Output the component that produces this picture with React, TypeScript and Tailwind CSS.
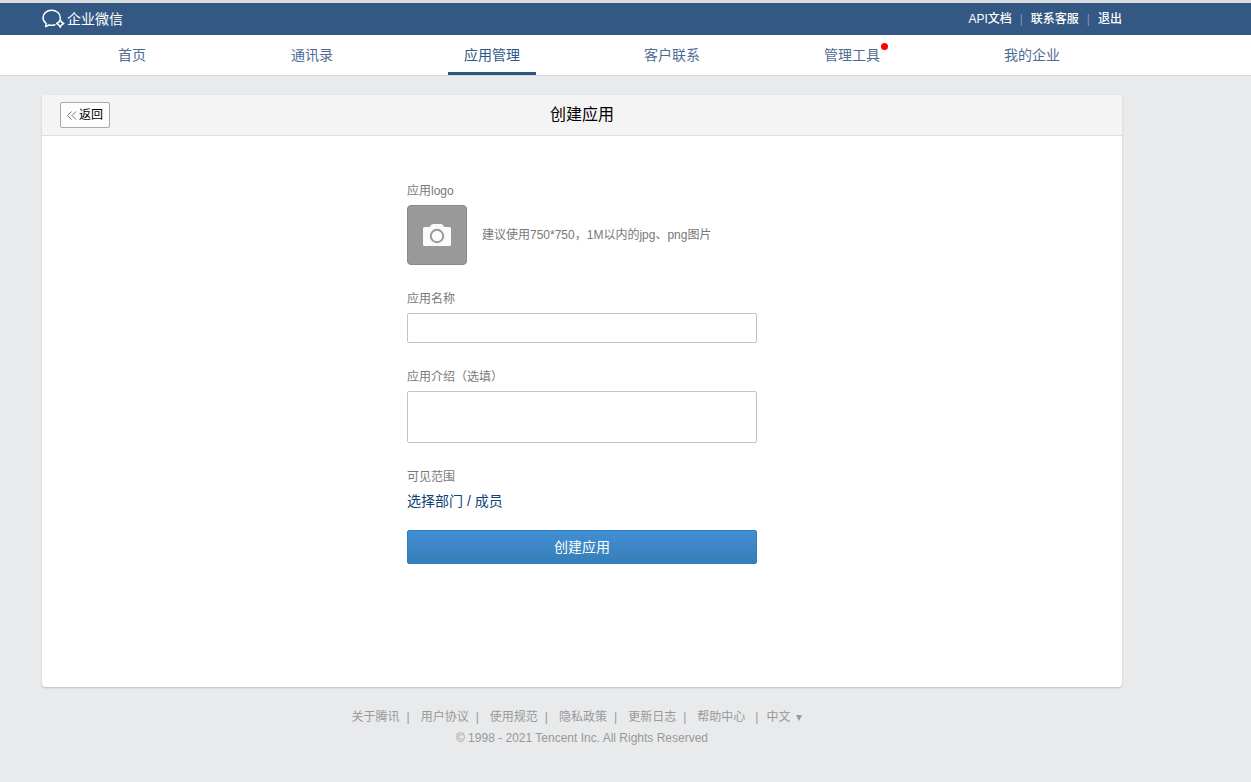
import { useState } from "react";
import clsx from "clsx";

const navItems = [
  { id: "home", label: "首页" },
  { id: "contacts", label: "通讯录" },
  { id: "apps", label: "应用管理" },
  { id: "customer", label: "客户联系" },
  { id: "tools", label: "管理工具", dot: true },
  { id: "profile", label: "我的企业" },
];

const footerLinks = ["关于腾讯", "用户协议", "使用规范", "隐私政策", "更新日志", "帮助中心"];

function Logo() {
  return (
    <a href="#" className="flex items-center gap-px text-white">
      <svg width="24" height="20" viewBox="0 0 24 20" fill="none" stroke="currentColor" strokeLinejoin="round" strokeLinecap="round" aria-hidden="true">
        <path d="M18.100 9.600c.1-.4.1-.8.1-1.200C18.200 4.300 14.300 1.200 9.600 1.200S1 4.500 1 8.600c0 2.400 1.200 4.500 3.200 5.900L3.700 17.700l3.200-1.700c.9.2 1.800.3 2.700.3 1.200 0 2.300-.2 3.300-.6" strokeWidth="1.500" />
        <path d="M18.200 10.800q.8 2.600 3.600 3.700-2.800 1.100-3.600 3.700-.8-2.600-3.600-3.700 2.800-1.100 3.600-3.700z" strokeWidth="1.500" />
      </svg>
      <span className="text-sm leading-5">企业微信</span>
    </a>
  );
}

function TopBar() {
  return (
    <div className="border-t-3 border-[#d9dbdf] bg-[#335883]">
      <div className="ml-[42px] mr-6 flex h-8 max-w-[1080px] items-center justify-between">
        <Logo />
        <div className="flex items-center text-xs font-medium text-white">
          <a href="#">API文档</a>
          <span className="mx-2 font-normal text-[#8296b0]">|</span>
          <a href="#">联系客服</a>
          <span className="mx-2 font-normal text-[#8296b0]">|</span>
          <a href="#">退出</a>
        </div>
      </div>
    </div>
  );
}

function NavBar() {
  const [active, setActive] = useState("apps");

  return (
    <nav className="border-b border-[#d5d7d9] bg-white">
      <div className="ml-[42px] mr-6 grid h-10 max-w-[1080px] grid-cols-6 justify-items-center">
        {navItems.map(item => (
          <a
            key={item.id}
            href="#"
            onClick={() => setActive(item.id)}
            className={clsx(
              "relative flex h-10 items-center border-b-3 px-4 pt-0.5 text-sm leading-5",
              active === item.id ? "border-[#2b5581] text-[#2f5785]" : "border-transparent text-[#4d6c94]"
            )}
          >
            {item.label}
            {item.dot && <span className="absolute right-2 top-2 size-[7px] rounded-full bg-[#ff0000]" />}
          </a>
        ))}
      </div>
    </nav>
  );
}

function LogoUpload() {
  return (
    <button
      type="button"
      aria-label="应用logo"
      className="flex size-[60px] items-center justify-center rounded-[4px] border border-[#898989] bg-[#999]"
    >
      <svg width="28" height="22" viewBox="0 0 28 22" aria-hidden="true">
        <path d="M1.500 3h5.100l1.800-2.200Q9 0 10 0h8q1 0 1.600.8L21.400 3h5.100Q28 3 28 4.500v16q0 1.500-1.500 1.500h-25Q0 22 0 20.500v-16Q0 3 1.500 3z" fill="#fafafa" />
        <circle cx="14" cy="12" r="6.200" fill="none" stroke="#999" strokeWidth="2" />
      </svg>
    </button>
  );
}

function CreateForm() {
  const [name, setName] = useState("");
  const [intro, setIntro] = useState("");

  return (
    <form
      onSubmit={e => e.preventDefault()}
      className="mx-auto flex w-full max-w-[350px] flex-col pb-[123px] pt-[45px] text-xs leading-5 text-[#787878]"
    >
      <p>应用logo</p>
      <div className="mt-1 flex items-center gap-[15px]">
        <LogoUpload />
        <span>建议使用750*750，1M以内的jpg、png图片</span>
      </div>

      <label htmlFor="app-name" className="mt-6">应用名称</label>
      <input
        id="app-name"
        value={name}
        onChange={e => setName(e.target.value)}
        className="mt-1 h-[30px] rounded-xs border border-[#c4c4c4] bg-white px-2 text-sm text-black outline-none"
      />

      <label htmlFor="app-intro" className="mt-6">应用介绍（选填）</label>
      <textarea
        id="app-intro"
        value={intro}
        onChange={e => setIntro(e.target.value)}
        className="mt-1 h-[52px] resize-none rounded-xs border border-[#c4c4c4] bg-white px-2 py-1 text-sm text-black outline-none"
      />

      <p className="mt-6">可见范围</p>
      <a href="#" className="mt-1 self-start text-sm leading-5 text-[#0f4277]">选择部门 / 成员</a>

      <button
        type="submit"
        className="mt-[19px] h-[34px] rounded-xs border border-[#2a80bf] bg-linear-to-b from-[#428fd6] to-[#367eb6] text-sm text-white"
      >
        创建应用
      </button>
    </form>
  );
}

function Footer() {
  return (
    <footer className="pb-8 pt-5 text-center text-xs leading-[21px] text-[#999]">
      <div className="flex items-center justify-center pr-2.5">
        {footerLinks.map(label => (
          <span key={label} className="group flex">
            <a href="#">{label}</a>
            <span className="ml-[7px] mr-[11px] group-last-of-type:ml-2.5 group-last-of-type:mr-2">|</span>
          </span>
        ))}
        <button type="button" className="flex items-center gap-1.5">
          中文
          <svg width="6" height="6" viewBox="0 0 6 6" fill="currentColor" aria-hidden="true">
            <path d="M0 0h6L3 6z" />
          </svg>
        </button>
      </div>
      <p>© 1998 - 2021 Tencent Inc. All Rights Reserved</p>
    </footer>
  );
}

export default function App() {
  return (
    <div className="min-h-screen bg-[#e8eaeb] font-['Liberation_Sans','Noto_Sans_CJK_SC',sans-serif]">
      <TopBar />
      <NavBar />
      <div className="ml-[42px] mr-6 max-w-[1080px] pt-[19px]">
        <main className="overflow-hidden rounded-[4px] bg-white shadow-[0_1px_2px_rgba(0,0,0,0.2)]">
          <header className="grid h-[41px] grid-cols-[1fr_auto_1fr] items-center border-b border-[#d9e0e6] bg-[#f4f4f4] px-[18px]">
            <button
              type="button"
              className="flex h-[26px] w-[50px] items-center justify-center gap-0.5 rounded-xs border border-[#a9a9a9] bg-[#fdfdfd] text-xs text-black"
            >
              <svg width="10" height="9" viewBox="0 0 10 9" fill="none" stroke="#777" aria-hidden="true">
                <path d="M4.500.5l-4 4 4 4M9 .5l-4 4 4 4" />
              </svg>
              返回
            </button>
            <h1 className="text-base text-black">创建应用</h1>
          </header>
          <CreateForm />
        </main>
        <Footer />
      </div>
    </div>
  );
}
